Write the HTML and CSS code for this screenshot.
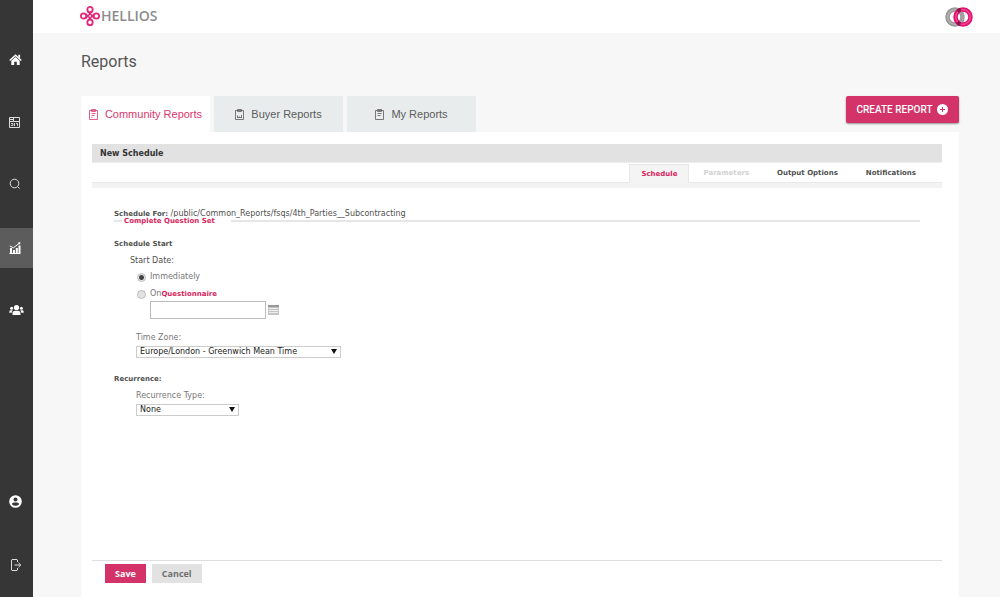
FILE: index.html
```html
<!DOCTYPE html>
<html lang="en">
<head>
<meta charset="utf-8">
<meta name="viewport" content="width=device-width, initial-scale=1">
<title>Hellios - Reports</title>
<link rel="stylesheet" href="styles.css">
</head>
<body>
<div class="app">
  <nav class="sidebar" aria-label="Main">
    <a class="nav-item nav-home" href="#" aria-label="Home">
      <svg width="13" height="12" viewBox="0 0 13 12"><path d="M.7 6.4 6.5 1.2l5.8 5.2" fill="none" stroke="#fff" stroke-width="1.4"/><path d="M9.3.8h1.8v3.4L9.3 2.8zM2.3 6.8l4.2-3.7 4.2 3.7V11H7.8V7.8H5.2V11H2.3z" fill="#fff"/></svg>
    </a>
    <a class="nav-item nav-board" href="#" aria-label="Dashboard">
      <svg width="11" height="11" viewBox="0 0 11 11" fill="none" stroke="#ddd"><path d="M.5.5h10v10H.5zM.5 4.5h10M4.500.5v4M.5 2.500h4"/><path d="M2 6.500h2v2H2M5.500 6v3M7 6.500h2M8.500 6.500v2.500" stroke="#ccc"/></svg>
    </a>
    <a class="nav-item nav-search" href="#" aria-label="Search">
      <svg width="12" height="12" viewBox="0 0 12 12" fill="none" stroke="#ddd"><circle cx="5.5" cy="5.5" r="4.3"/><path d="m8.6 8.6 2 2"/></svg>
    </a>
    <a class="nav-item nav-reports active" href="#" aria-label="Reports">
      <svg width="12" height="12" viewBox="0 0 12 12"><path d="M1 6h2v5H1zM4 8h2v3H4zM6.800 6h2v5h-2zM9.500 3.500h2V11h-2zM.5 11h11v1H.5z" fill="#fff"/><path d="m.8 4 3.600 1.800L10.600 1" fill="none" stroke="#fff"/><path d="m8.800.5 2.700-.2-.6 2.500z" fill="#fff"/></svg>
    </a>
    <a class="nav-item nav-users" href="#" aria-label="Users">
      <svg width="15" height="12" viewBox="0 0 15 12" fill="#fff"><circle cx="7.500" cy="3.500" r="2.600"/><circle cx="2.600" cy="4.200" r="1.500"/><circle cx="12.400" cy="4.200" r="1.500"/><path d="M3.500 11V9.300q0-2.600 2.600-2.600h2.800q2.600 0 2.600 2.600V11zM.3 8.800V7.700q0-1.400 1.600-1.400h1.800q-.9 1-1 2.500zM14.700 8.800V7.700q0-1.400-1.600-1.400h-1.800q.9 1 1 2.500z"/></svg>
    </a>
    <a class="nav-item nav-account" href="#" aria-label="Account">
      <svg width="13" height="13" viewBox="0 0 13 13"><circle cx="6.500" cy="6.500" r="6.300" fill="#fff"/><circle cx="6.500" cy="4.500" r="2" fill="#363636"/><path d="M2.800 9.300q.5-1.900 2.200-1.900h3q1.700 0 2.200 1.900-3.700 3-7.400 0z" fill="#363636"/></svg>
    </a>
    <a class="nav-item nav-logout" href="#" aria-label="Log out">
      <svg width="11" height="12" viewBox="0 0 11 12" fill="none" stroke="#ddd"><path d="M6.500 3V1l-.5-.5H1l-.5.5v10l.5.5h5l.5-.5V9M3.500 6h6M7.500 3.800 9.800 6 7.500 8.200"/></svg>
    </a>
  </nav>

  <div class="main">
    <header class="topbar">
      <a class="brand" href="#">
        <svg width="20" height="20" viewBox="0 0 20 20" fill="none" stroke="#e5267a" stroke-width="1.800"><circle cx="10" cy="3.600" r="2.700"/><circle cx="16.400" cy="10" r="2.700"/><circle cx="10" cy="16.400" r="2.700"/><circle cx="3.600" cy="10" r="2.700"/><path d="m5.800 8 6.200 6.300M8 5.700l6.300 6.200M5.800 12 12 5.700M8 14.300l6.300-6.200" stroke-width="1.500"/></svg>
        <span>HELLIOS</span>
      </a>
      <svg class="rings" width="28" height="20" viewBox="0 0 28 20" fill="none"><circle cx="10" cy="10" r="7.500" stroke="#999" stroke-width="4.500"/><circle cx="10" cy="10" r="7.300" stroke="#b8b8b8" stroke-width="1.200"/><circle cx="18" cy="10" r="7.500" stroke="#e5136f" stroke-width="4.500"/><circle cx="18" cy="10" r="7.300" stroke="#f0529a" stroke-width="1.200"/><path d="M15.800 5.300a7.500 7.500 0 0 1 0 9.400" stroke="#a5a0a3" stroke-width="3"/><path d="M12.500 4.500q1.500-1.500 3.200-2M12.300 15.200q1.200 1.500 3.200 2.200" stroke="#8c154c" stroke-width="3.500"/></svg>
    </header>

    <main class="content">
      <h1>Reports</h1>
      <div class="tab-row">
        <div class="tabs">
          <button class="tab tab-active" type="button">
            <svg width="9" height="11" viewBox="0 0 9 11" fill="none" stroke="currentColor" stroke-width=".8"><path d="M.5 1.500h8v9h-8zM2.500.5h4v2h-4zM2.500 4.500h4M2.500 6.500h3M2.500 8.500h1"/></svg>
            Community Reports
          </button>
          <button class="tab" type="button">
            <svg width="9" height="11" viewBox="0 0 9 11" fill="none" stroke="currentColor" stroke-width=".8"><path d="M.5 1.500h8v9h-8zM2.500.5h4v2h-4zM2.500 8.500V6.500M4.500 8.500V7.500M6.500 8.500V6M2 8.500h5"/></svg>
            Buyer Reports
          </button>
          <button class="tab" type="button">
            <svg width="9" height="11" viewBox="0 0 9 11" fill="none" stroke="currentColor" stroke-width=".8"><path d="M.5 1.500h8v9h-8zM2.500.5h4v2h-4zM2.500 4.500h4M2.500 6.500h3"/></svg>
            My Reports
          </button>
        </div>
        <button class="create" type="button">CREATE REPORT
          <svg width="11" height="11" viewBox="0 0 11 11"><circle cx="5.500" cy="5.500" r="5.500" fill="#fff"/><path d="M5.500 3v5M3 5.500h5" stroke="#d33368"/></svg>
        </button>
      </div>

      <section class="panel">
        <h2>New Schedule</h2>
        <div class="subtabs">
          <button class="subtab current" type="button">Schedule</button>
          <button class="subtab" type="button" disabled>Parameters</button>
          <button class="subtab" type="button">Output Options</button>
          <button class="subtab" type="button">Notifications</button>
        </div>
        <form class="schedule">
          <p class="target"><b>Schedule For:</b> /public/Common_Reports/fsqs/4th_Parties__Subcontracting</p>
          <div class="legend"><span>Complete Question Set</span></div>
          <h3>Schedule Start</h3>
          <fieldset class="start">
            <legend>Start Date:</legend>
            <div class="choice"><input type="radio" id="now" name="start" checked><label for="now">Immediately</label></div>
            <div class="choice"><input type="radio" id="on" name="start"><label for="on">On</label><strong>Questionnaire</strong></div>
            <div class="date">
              <input type="text" aria-label="Start date">
              <button type="button" aria-label="Open calendar"><svg width="11" height="10" viewBox="0 0 11 10"><path d="M0 0h11v10H0z" fill="#c4c4c4"/><path d="M0 0h11v2H0z" fill="#999"/><path d="M1 3.500h9M1 5.500h9M1 7.500h9" stroke="#eee"/></svg></button>
            </div>
          </fieldset>
          <div class="field">
            <label for="zone">Time Zone:</label>
            <div class="select zone"><select id="zone"><option>Europe/London - Greenwich Mean Time</option></select></div>
          </div>
          <h3 class="recurrence">Recurrence:</h3>
          <div class="field">
            <label for="type">Recurrence Type:</label>
            <div class="select type"><select id="type"><option>None</option></select></div>
          </div>
        </form>
        <footer class="actions">
          <button class="save" type="button">Save</button>
          <button class="cancel" type="button">Cancel</button>
        </footer>
      </section>
    </main>
  </div>
</div>
</body>
</html>
```

FILE: styles.css
```css
* { box-sizing: border-box; }
body { margin: 0; background: #f7f7f7; color: #505050; font: 8px/12px "DejaVu Sans", Verdana, sans-serif; }
h1, h2, h3, p { margin: 0; }
button, input, select { font: inherit; color: inherit; }
button { border: 0; padding: 0; background: none; cursor: pointer; }
svg { display: block; flex: none; }
h3, b, strong, .subtab, .legend { font-size: 7px; font-weight: bold; }

.app { display: flex; min-height: 100vh; }
.sidebar { flex: 0 0 33px; display: flex; flex-direction: column; gap: 22px; padding-top: 40px; background: #363636; }
.nav-item { display: flex; align-items: center; height: 40px; padding-left: 9px; }
.active { background: #5c5c5c; }
.nav-reports { margin-top: 2px; }
.nav-account { margin-top: auto; }
.nav-logout { margin: 2px 0 12px; padding-left: 11px; }

.main { flex: 1; min-width: 0; display: flex; flex-direction: column; }
.topbar { display: flex; align-items: center; justify-content: space-between; height: 33px; padding: 0 27px 0 47px; background: #fff; }
.brand { display: flex; align-items: center; gap: 1px; height: 20px; margin-bottom: 2px; color: #8c8c8c; text-decoration: none; font: 600 14px/20px "Open Sans", sans-serif; }

.content { flex: 1; display: flex; flex-direction: column; padding: 18px 41px 0 48px; }
h1 { font: 400 16px/22px Roboto, sans-serif; color: #555; }
.tab-row { display: flex; align-items: flex-start; justify-content: space-between; height: 36px; margin-top: 23px; }
.tabs { display: flex; gap: 4px; }
.tab { display: flex; align-items: center; justify-content: center; gap: 7px; width: 129px; height: 36px; background: #e8eced; color: #5c5c5c; font: 11px/16px "Liberation Sans", Arial, sans-serif; }
.tab-active { background: #fff; color: #d9386d; }
.create { display: flex; align-items: center; justify-content: center; gap: 5px; width: 113px; height: 27px; border-radius: 2px; background: #d33368; color: #fff; font: 500 10px/14px Roboto, sans-serif; box-shadow: 0 1px 2px #0006; }

.panel { flex: 1; display: flex; flex-direction: column; padding: 12px 17px 14px 11px; background: #fff; }
h2 { padding: 0 8px; height: 19px; background: #e2e2e2; border-bottom: 1px solid #eee; color: #333; font-size: 8px; line-height: 19px; }
.subtabs { display: flex; justify-content: flex-end; height: 25px; padding: 1px 12px 0 0; border-bottom: 5px solid #f3f3f3; box-shadow: inset 0 -1px #e9e9e9; }
.subtab { padding: 0 14px 2px; }
.subtab:disabled { color: #d2d2d2; cursor: default; }
.current { border: 1px solid #e7e7e7; border-bottom: 0; background: #f4f4f4; color: #d91f5d; padding: 0 11px; }

.schedule { flex: 1; padding: 20px 22px; }
.target { line-height: 12px; }
.legend { display: flex; align-items: center; height: 8px; margin-top: -3px; }
.legend::before { content: ""; width: 8px; height: 2px; background: #e6e6e6; }
.legend::after { content: ""; flex: 1; height: 2px; background: #e6e6e6; }
.legend span { padding: 0 16px 0 2px; background: #fff; line-height: 8px; color: #d91f5d; }
h3 { margin-top: 13px; line-height: 12px; }
fieldset { border: 0; min-width: 0; margin: 5px 0 0; padding: 0 0 0 16px; }
legend { padding: 0; line-height: 12px; }
.choice { display: flex; align-items: center; height: 12px; margin: 4px 0 0 7px; color: #777; }
.choice + .choice { margin-top: 5px; }
.choice input { appearance: none; width: 9px; height: 9px; margin: 0 4px 0 0; border: 1px solid #bbb; border-radius: 50%; background: #e2e2e2; }
.choice input:checked { background: radial-gradient(circle, #444 0 2px, #e8e8e8 3px); }
.choice strong { color: #d91f5d; }
.date { display: flex; align-items: center; gap: 2px; margin: 1px 0 0 20px; }
.date input { width: 116px; height: 18px; padding: 2px; border: 1px solid #bbb; background: #fff; }
.field { margin-left: 22px; color: #777; }
.field label { display: block; line-height: 12px; }
fieldset + .field { margin-top: 13px; }
.select { position: relative; height: 12px; margin-top: 2px; }
.select select { appearance: none; display: block; width: 100%; height: 12px; padding: 0 3px; border: 1px solid #ccc; border-radius: 0; background: #fff; color: #222; line-height: 10px; }
.select::after { content: ""; position: absolute; right: 4px; top: 3px; border: 3px solid transparent; border-top: 5px solid #111; border-bottom: 0; pointer-events: none; }
.zone { width: 205px; }
.type { width: 103px; }
.recurrence { margin-top: 15px; }
h3 + .field { margin-top: 5px; }

.actions { display: flex; gap: 6px; padding: 3px 13px 0; border-top: 1px solid #dedede; font: 700 9px/12px "Open Sans", sans-serif; }
.actions button { height: 19px; padding: 0 10px; }
.save { background: #d33368; color: #fff; }
.cancel { background: #e2e2e2; color: #707070; }
```
